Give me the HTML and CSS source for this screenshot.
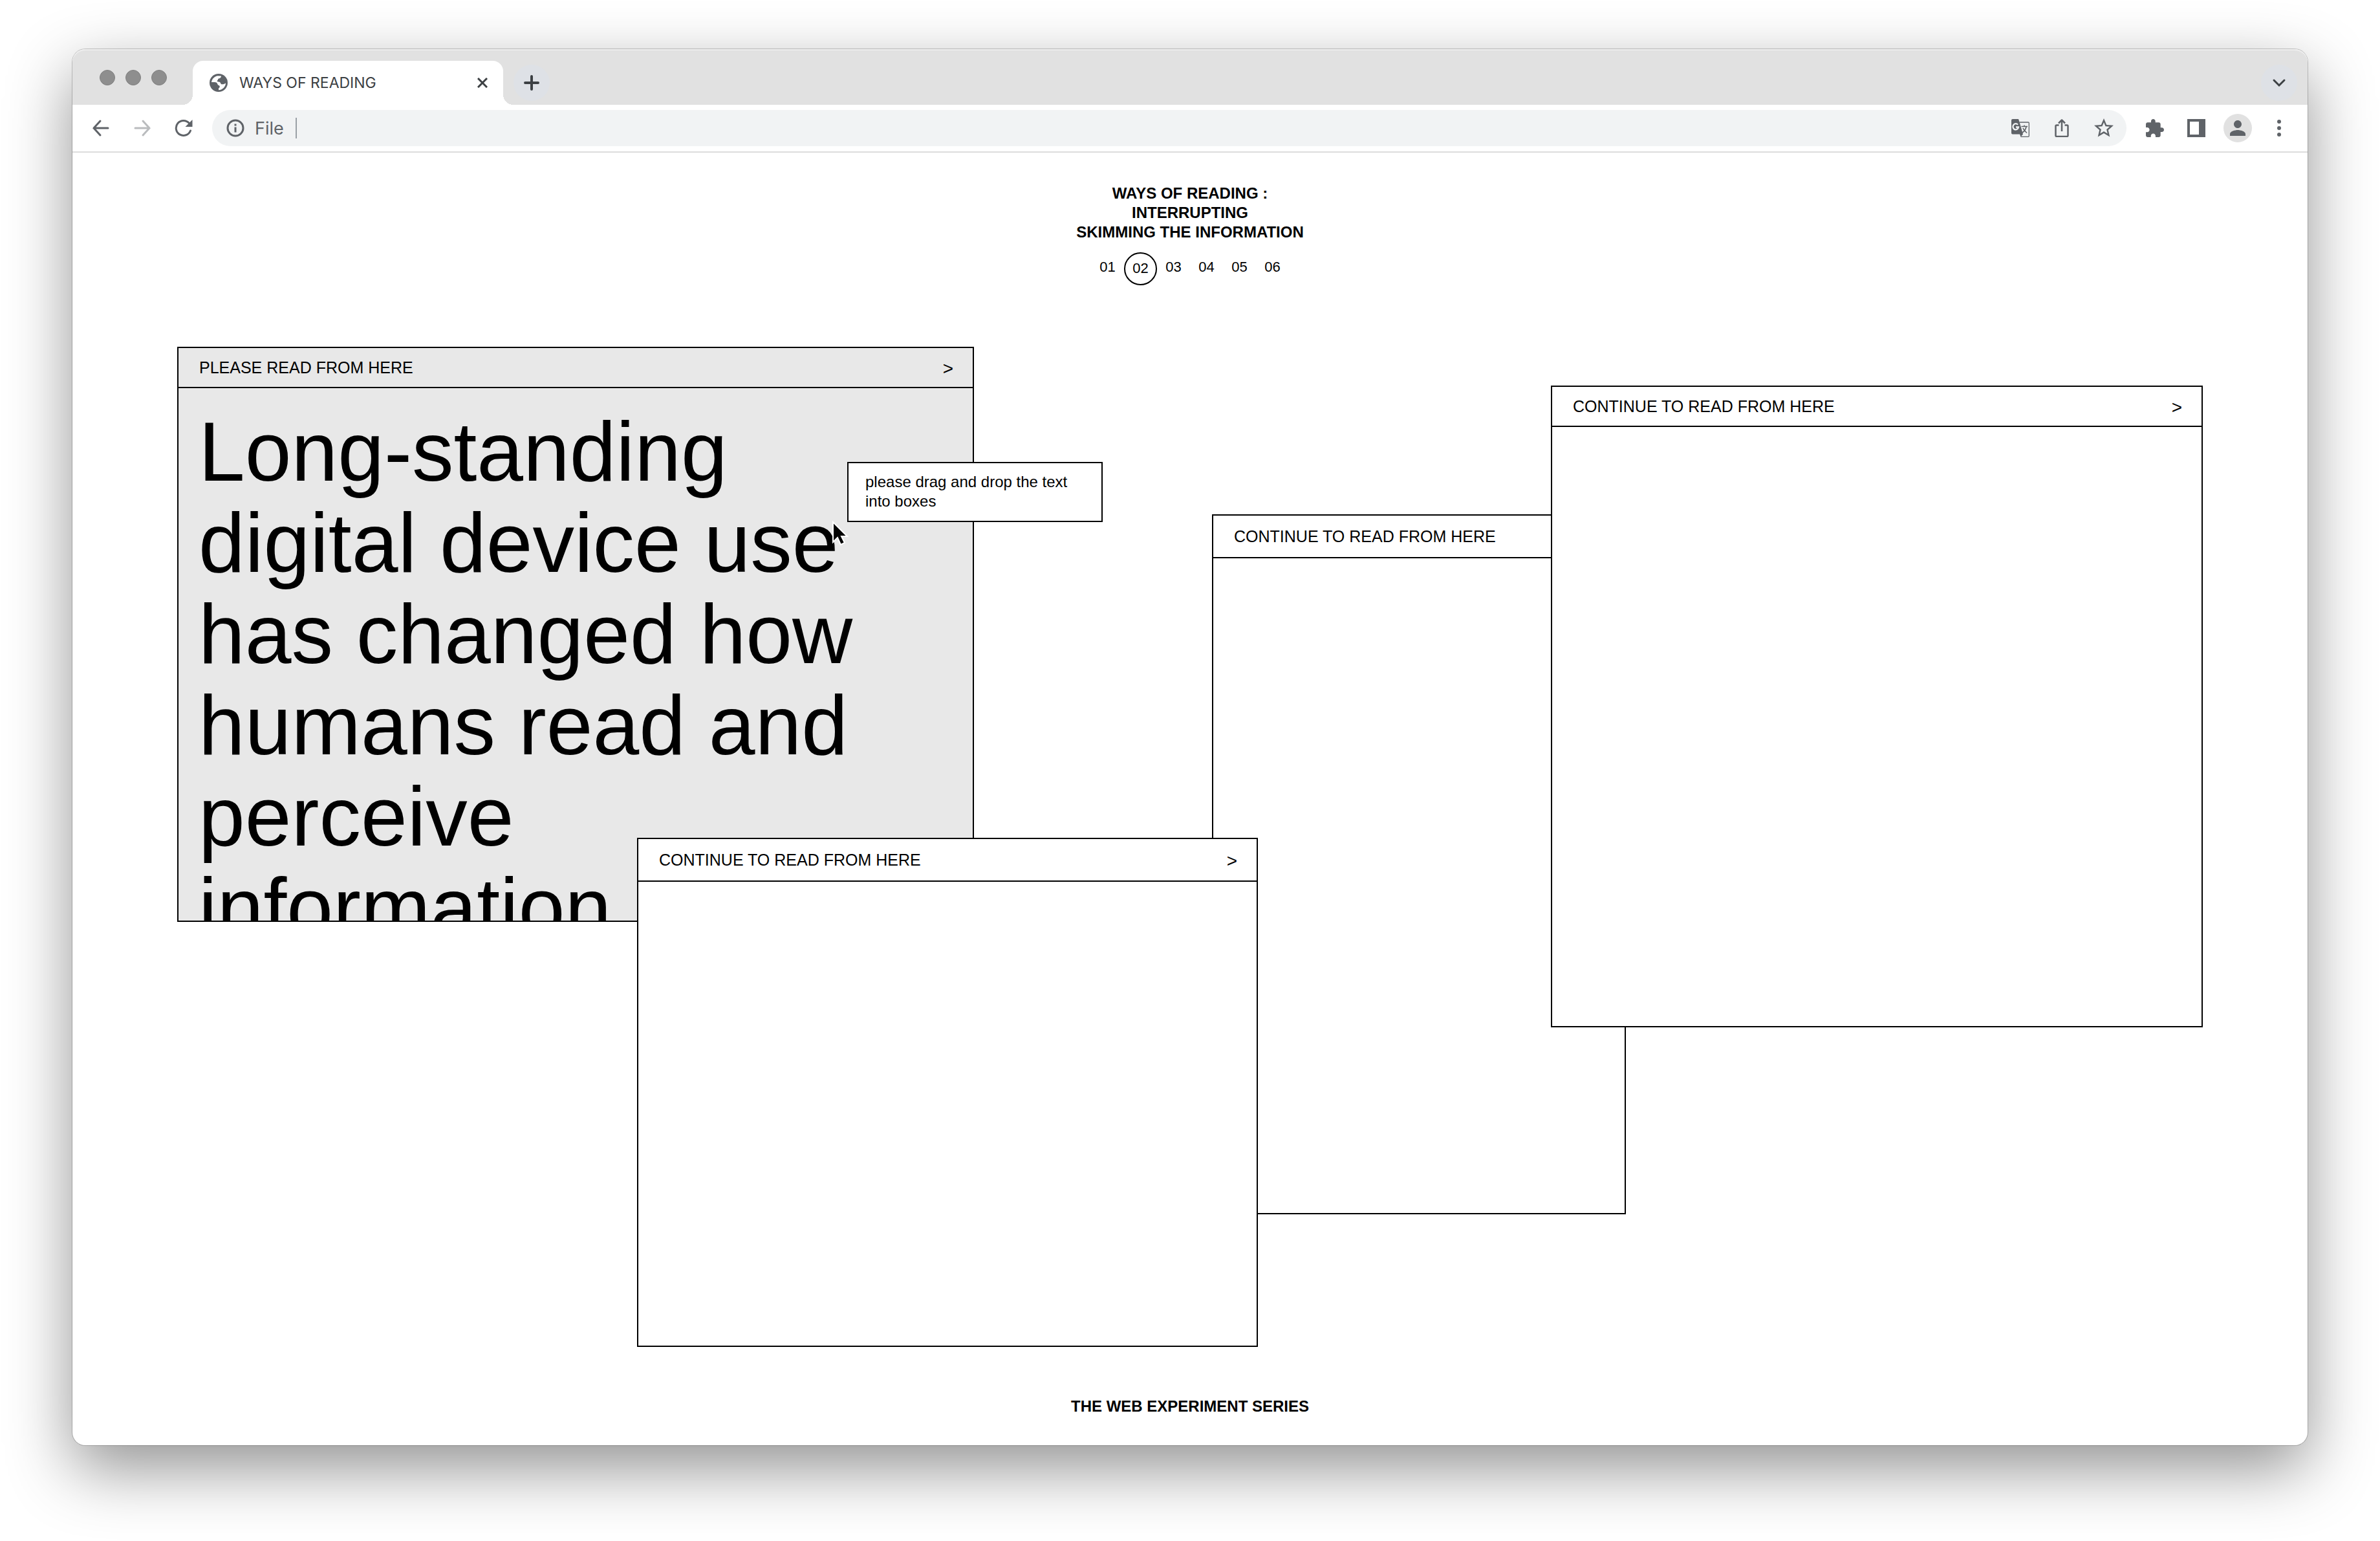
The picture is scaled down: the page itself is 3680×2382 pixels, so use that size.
FILE: index.html
```html
<!DOCTYPE html>
<html lang="en">
<head>
<meta charset="utf-8">
<title>WAYS OF READING</title>
<link rel="stylesheet" href="styles.css">
</head>
<body>
<div class="browser">
  <div class="tab-strip">
    <div class="lights"><span class="light"></span><span class="light"></span><span class="light"></span></div>
    <div class="tab">
      <svg class="icon-28" viewBox="0 0 28 28" aria-hidden="true"><circle cx="14" cy="14" r="14" fill="currentColor"/><path fill="#fff" d="M3 13C3.500 8 8 3.500 13 3.200L18 3.600C18 6 16.500 7 14 7.500C12.500 8 13.500 9.500 12 10.500C11 11.500 12.500 12.500 14 12.500C16.500 12.500 17 14 17.500 15.500C18.500 17 22 16.500 25 14.500C25 19.500 20.500 25 14 25.200L14 22.500C16 21.500 16.500 19 14.500 18C12 17.500 12.500 14.500 10.500 13.500C8 12.800 6 13 3 13z"/></svg>
      <span class="tab-title">WAYS OF READING</span>
      <button class="plain" aria-label="Close tab"><svg class="icon-16" viewBox="0 0 16 16" fill="none" stroke="currentColor" stroke-width="3" aria-hidden="true"><path d="M1 1l14 14M15 1L1 15"/></svg></button>
    </div>
    <button class="round" aria-label="New tab"><svg class="icon-24" viewBox="0 0 24 24" fill="none" stroke="currentColor" stroke-width="4" stroke-linecap="round" aria-hidden="true"><path d="M12 2v20M2 12h20"/></svg></button>
    <button class="round tab-search" aria-label="Search tabs"><svg class="icon-24" viewBox="0 0 24 24" fill="none" stroke="currentColor" stroke-width="3" stroke-linecap="round" aria-hidden="true"><path d="M4 8l8 8 8-8"/></svg></button>
  </div>
  <div class="toolbar">
    <div class="nav-buttons">
      <button class="plain" aria-label="Back"><svg class="icon-28" viewBox="0 0 28 28" fill="none" stroke="currentColor" stroke-width="3" stroke-linecap="round" aria-hidden="true"><path d="M25 14H3M13 3L3 14l10 11"/></svg></button>
      <button class="plain forward" aria-label="Forward"><svg class="icon-28" viewBox="0 0 28 28" fill="none" stroke="currentColor" stroke-width="3" stroke-linecap="round" aria-hidden="true"><path d="M3 14h22M15 3l10 11-10 11"/></svg></button>
      <button class="plain" aria-label="Reload"><svg class="icon-28" viewBox="0 0 28 28" fill="none" stroke="currentColor" stroke-width="3" stroke-linecap="round" aria-hidden="true"><path d="M24.500 18A11.500 11.500 0 1 1 22.500 6.500"/><path d="M27.500 1v11h-11z" fill="currentColor" stroke="none"/></svg></button>
    </div>
    <div class="address">
      <svg class="icon-28" viewBox="0 0 28 28" fill="none" stroke="currentColor" stroke-width="3" aria-hidden="true"><circle cx="14" cy="14" r="12"/><path d="M14 12.500v8M14 7.500v3"/></svg>
      <label class="address-label" for="url">File</label>
      <input class="address-input" id="url" type="text">
      <button class="plain" aria-label="Translate"><svg class="icon-28" viewBox="0 0 28 28" aria-hidden="true"><path fill="currentColor" d="M2 0h9l1.500 4.500L18 23.500 14.500 27.500 13 23.500H2a2 2 0 0 1-2-2V2a2 2 0 0 1 2-2z"/><path fill="none" stroke="currentColor" stroke-width="1.300" d="M12.500 5h13.500a1.300 1.300 0 0 1 1.300 1.300v19.700a1.300 1.300 0 0 1-1.300 1.300H14.500"/><path fill="none" stroke="currentColor" stroke-width="1.600" d="M15.500 11.500h9.500M20 9.500v2M23 12c-.8 4-3 7-6 9M18 14c1 3 3.500 5.500 6 7.500"/><path fill="none" stroke="#f1f3f4" stroke-width="2.300" d="M10 8.800A4.300 4.600 0 1 0 11 12.500H7"/></svg></button>
      <button class="plain" aria-label="Share"><svg class="icon-28" viewBox="0 0 28 28" fill="none" stroke="currentColor" stroke-width="2.500" stroke-linejoin="round" aria-hidden="true"><path d="M9.500 9.500H6a1.500 1.500 0 0 0-1.500 1.500v14.500A1.500 1.500 0 0 0 6 27h16a1.500 1.500 0 0 0 1.500-1.500V11A1.500 1.500 0 0 0 22 9.500h-3.500M14 19V1.500M9 6.500l5-5 5 5"/></svg></button>
      <button class="plain" aria-label="Bookmark"><svg class="icon-30" viewBox="2 2 20 20" fill="currentColor" aria-hidden="true"><path d="M22 9.240l-7.190-.62L12 2 9.190 8.630 2 9.240l5.460 4.730L5.820 21 12 17.270 18.180 21l-1.630-7.030L22 9.240zM12 15.400l-3.760 2.270 1-4.280-3.320-2.880 4.380-.38L12 6.100l1.710 4.040 4.380.38-3.320 2.880 1 4.280L12 15.400z"/></svg></button>
    </div>
    <div class="tools">
      <button class="plain" aria-label="Extensions"><svg class="icon-28" viewBox="2 1 21 21" fill="currentColor" aria-hidden="true"><path d="M20.500 11H19V7c0-1.100-.9-2-2-2h-4V3.500C13 2.120 11.880 1 10.500 1S8 2.120 8 3.500V5H4c-1.100 0-1.990.9-1.990 2v3.800H3.500c1.490 0 2.700 1.210 2.700 2.700s-1.210 2.700-2.700 2.700H2V20c0 1.100.9 2 2 2h3.800v-1.500c0-1.490 1.210-2.700 2.700-2.700 1.490 0 2.700 1.210 2.700 2.700V22H17c1.100 0 2-.9 2-2v-4h1.500c1.380 0 2.500-1.120 2.500-2.500S21.880 11 20.500 11z"/></svg></button>
      <button class="plain" aria-label="Side panel"><svg class="icon-28" viewBox="0 0 28 28" fill="currentColor" fill-rule="evenodd" aria-hidden="true"><path d="M0 0h28v28H0zM4 4v20h14V4z"/></svg></button>
      <button class="avatar" aria-label="Profile"><svg class="icon-24" viewBox="4 4 16 16" fill="currentColor" aria-hidden="true"><path d="M12 12c2.210 0 4-1.790 4-4s-1.790-4-4-4-4 1.790-4 4 1.790 4 4 4zm0 2c-2.670 0-8 1.340-8 4v2h16v-2c0-2.660-5.330-4-8-4z"/></svg></button>
      <button class="plain" aria-label="Menu"><svg class="icon-28" viewBox="0 0 28 28" fill="currentColor" aria-hidden="true"><circle cx="14" cy="4" r="3"/><circle cx="14" cy="14" r="3"/><circle cx="14" cy="24" r="3"/></svg></button>
    </div>
  </div>
  <main class="page">
    <header class="page-head">
      <h1 class="title">WAYS OF READING :<br>INTERRUPTING<br>SKIMMING THE INFORMATION</h1>
      <nav class="pager">
        <a class="page-link" href="#01">01</a>
        <a class="page-link current" href="#02">02</a>
        <a class="page-link" href="#03">03</a>
        <a class="page-link" href="#04">04</a>
        <a class="page-link" href="#05">05</a>
        <a class="page-link" href="#06">06</a>
      </nav>
    </header>
    <section class="box box-source">
      <div class="box-bar"><h2 class="box-title">PLEASE READ FROM HERE</h2><button class="next" aria-label="Next">&gt;</button></div>
      <p class="passage">Long-standing digital device use has changed how humans read and perceive information</p>
    </section>
    <section class="box box-middle">
      <div class="box-bar tall"><h2 class="box-title">CONTINUE TO READ FROM HERE</h2></div>
    </section>
    <section class="box box-right">
      <div class="box-bar"><h2 class="box-title">CONTINUE TO READ FROM HERE</h2><button class="next" aria-label="Next">&gt;</button></div>
    </section>
    <section class="box box-front">
      <div class="box-bar tall"><h2 class="box-title">CONTINUE TO READ FROM HERE</h2><button class="next" aria-label="Next">&gt;</button></div>
    </section>
    <div class="hint" role="tooltip">please drag and drop the text into boxes</div>
    <svg class="pointer" viewBox="0 0 26 40" aria-hidden="true"><path d="M1 2v31l7-7 5 11 6-3-5-10h9z" fill="#000" stroke="#fff" stroke-width="2"/></svg>
    <footer class="page-foot">THE WEB EXPERIMENT SERIES</footer>
  </main>
</div>
</body>
</html>
```

FILE: styles.css
```css
* { box-sizing: border-box; }

body {
  margin: 0;
  min-height: 100vh;
  padding: 76px 112px 148px;
  display: flex;
  background: #fff;
  color: #000;
  font-family: "Liberation Sans", Arial, sans-serif;
}

button {
  padding: 0;
  border: 0;
  background: none;
  color: inherit;
  font: inherit;
}

svg { display: block; }
.icon-16 { width: 16px; height: 16px; }
.icon-24 { width: 24px; height: 24px; }
.icon-28 { width: 28px; height: 28px; }
.icon-30 { width: 30px; height: 30px; }

.browser {
  flex: 1;
  display: flex;
  flex-direction: column;
  border-radius: 20px;
  background: #fff;
  box-shadow: 0 0 0 1px rgba(0, 0, 0, .2), 0 36px 100px rgba(0, 0, 0, .43);
}

/* Tab strip */
.tab-strip {
  height: 86px;
  padding: 18px 16px 0 42px;
  display: flex;
  align-items: stretch;
  border-radius: 20px 20px 0 0;
  background: #e1e1e1;
  box-shadow: inset 0 2px 0 #eee;
  color: #3c4043;
}

.lights {
  width: 144px;
  height: 52px;
  display: flex;
  align-items: center;
  gap: 16px;
}

.light {
  width: 24px;
  height: 24px;
  border: 1px solid #808080;
  border-radius: 50%;
  background: #8e8e8e;
}

.tab {
  position: relative;
  width: 480px;
  padding: 0 24px 0 26px;
  display: flex;
  align-items: center;
  gap: 18px;
  border-radius: 16px 16px 0 0;
  background: #fff;
  color: #5f6368;
}

.tab::before,
.tab::after {
  content: "";
  position: absolute;
  bottom: 0;
  width: 16px;
  height: 16px;
}

.tab::before {
  right: 100%;
  background: radial-gradient(circle at 0 0, transparent 16px, #fff 16px);
}

.tab::after {
  left: 100%;
  background: radial-gradient(circle at 100% 0, transparent 16px, #fff 16px);
}

.tab-title {
  flex: 1;
  color: #3c4043;
  font: 23px Inter, sans-serif;
}

.tab .plain { color: #3c4043; }

.round {
  width: 56px;
  height: 56px;
  margin: 6px 0 0 16px;
  display: grid;
  place-items: center;
  border-radius: 50%;
  background: #dee1e6;
}

.tab-search { margin-left: auto; }

/* Toolbar */
.toolbar {
  height: 74px;
  padding: 0 30px;
  display: flex;
  align-items: center;
  border-bottom: 2px solid #dcdcdc;
  color: #5f6368;
}

.nav-buttons {
  width: 186px;
  display: flex;
  gap: 36px;
}

.forward { color: #babcbe; }

.address {
  flex: 1;
  height: 56px;
  padding: 0 20px 0 22px;
  display: flex;
  align-items: center;
  gap: 36px;
  border-radius: 28px;
  background: #f1f3f4;
}

.address-label {
  margin-left: -20px;
  font: 27px Inter, sans-serif;
}

.address-input {
  flex: 1;
  height: 32px;
  margin-left: -18px;
  padding: 0 16px;
  border: 0;
  border-left: 2px solid #9aa0a6;
  background: none;
  font: 27px Inter, sans-serif;
}

.tools {
  display: flex;
  align-items: center;
  gap: 36px;
  padding-left: 30px;
}

.avatar {
  width: 44px;
  height: 44px;
  margin: 0 -8px;
  display: grid;
  place-items: center;
  border-radius: 50%;
  background: #e1e1e1;
}

/* Page */
.page {
  position: relative;
  flex: 1;
  padding: 48px 0 45px;
  display: flex;
  flex-direction: column;
  align-items: center;
  font-size: 24px;
  line-height: 30px;
}

.title {
  margin: 0 0 16px;
  font-size: 24px;
  font-weight: bold;
  text-align: center;
}

.pager {
  display: flex;
  justify-content: center;
}

.page-link {
  width: 51px;
  height: 51px;
  padding-top: 8px;
  color: #000;
  font-size: 22px;
  text-align: center;
  text-decoration: none;
}

.current {
  border: 2px solid #000;
  border-radius: 50%;
}

.page-foot {
  margin-top: auto;
  font-weight: bold;
}

.box {
  position: absolute;
  overflow: hidden;
  border: 2px solid #000;
  background: #fff;
}

.box-source { left: 162px; top: 300px; width: 1232px; height: 889px; background: #e8e8e8; }
.box-middle { left: 1762px; top: 559px; width: 640px; height: 1082px; }
.box-right { left: 2286px; top: 360px; width: 1008px; height: 992px; }
.box-front { left: 873px; top: 1059px; width: 960px; height: 787px; }

.box-bar {
  height: 62px;
  padding: 0 30px 0 32px;
  display: flex;
  align-items: center;
  justify-content: space-between;
  border-bottom: 2px solid #000;
}

.tall { height: 66px; }

.box-title {
  margin: 0;
  font-size: 25px;
  font-weight: normal;
}

.next {
  padding-top: 4px;
  font-size: 28px;
}

.passage {
  margin: 0;
  padding: 28px 64px 28px 31px;
  font-size: 129px;
  line-height: 141px;
}

.hint {
  position: absolute;
  left: 1198px;
  top: 478px;
  width: 395px;
  height: 93px;
  padding: 14px 26px;
  border: 2px solid #000;
  background: #fff;
}

.pointer {
  position: absolute;
  left: 1175px;
  top: 569px;
  width: 26px;
  height: 40px;
}
```
